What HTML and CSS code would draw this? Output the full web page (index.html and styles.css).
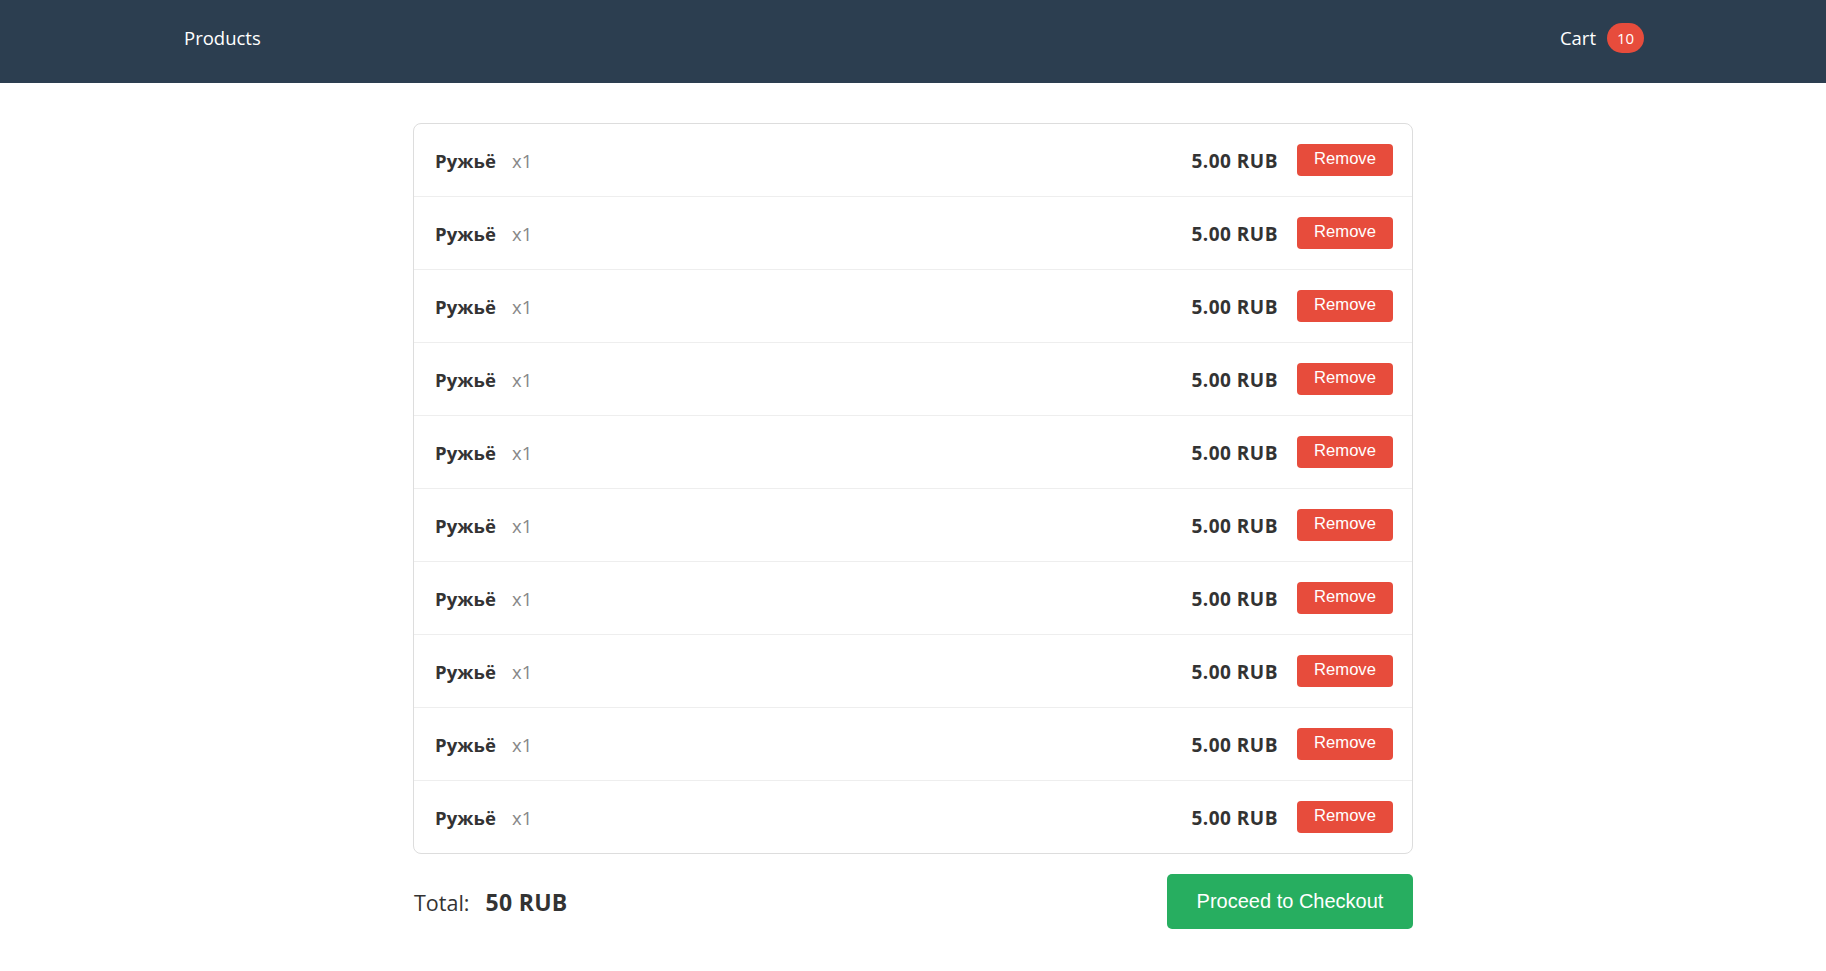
FILE: index.html
```html
<!DOCTYPE html>
<html lang="ru">
<head>
<meta charset="utf-8">
<title>Cart</title>
<link rel="stylesheet" href="styles.css">
</head>
<body>
<header class="topbar">
  <div class="topbar-inner">
    <a class="nav-link" href="#">Products</a>
    <a class="nav-link cart-link" href="#">Cart <span class="badge">10</span></a>
  </div>
</header>
<main class="page">
  <ul class="cart-list">
    <li class="cart-item"><div class="item-info"><span class="item-name">Ружьё</span><span class="item-qty">x1</span></div><div class="item-actions"><span class="item-price">5.00 RUB</span><button class="btn-remove">Remove</button></div></li>
    <li class="cart-item"><div class="item-info"><span class="item-name">Ружьё</span><span class="item-qty">x1</span></div><div class="item-actions"><span class="item-price">5.00 RUB</span><button class="btn-remove">Remove</button></div></li>
    <li class="cart-item"><div class="item-info"><span class="item-name">Ружьё</span><span class="item-qty">x1</span></div><div class="item-actions"><span class="item-price">5.00 RUB</span><button class="btn-remove">Remove</button></div></li>
    <li class="cart-item"><div class="item-info"><span class="item-name">Ружьё</span><span class="item-qty">x1</span></div><div class="item-actions"><span class="item-price">5.00 RUB</span><button class="btn-remove">Remove</button></div></li>
    <li class="cart-item"><div class="item-info"><span class="item-name">Ружьё</span><span class="item-qty">x1</span></div><div class="item-actions"><span class="item-price">5.00 RUB</span><button class="btn-remove">Remove</button></div></li>
    <li class="cart-item"><div class="item-info"><span class="item-name">Ружьё</span><span class="item-qty">x1</span></div><div class="item-actions"><span class="item-price">5.00 RUB</span><button class="btn-remove">Remove</button></div></li>
    <li class="cart-item"><div class="item-info"><span class="item-name">Ружьё</span><span class="item-qty">x1</span></div><div class="item-actions"><span class="item-price">5.00 RUB</span><button class="btn-remove">Remove</button></div></li>
    <li class="cart-item"><div class="item-info"><span class="item-name">Ружьё</span><span class="item-qty">x1</span></div><div class="item-actions"><span class="item-price">5.00 RUB</span><button class="btn-remove">Remove</button></div></li>
    <li class="cart-item"><div class="item-info"><span class="item-name">Ружьё</span><span class="item-qty">x1</span></div><div class="item-actions"><span class="item-price">5.00 RUB</span><button class="btn-remove">Remove</button></div></li>
    <li class="cart-item"><div class="item-info"><span class="item-name">Ружьё</span><span class="item-qty">x1</span></div><div class="item-actions"><span class="item-price">5.00 RUB</span><button class="btn-remove">Remove</button></div></li>
  </ul>
  <div class="summary">
    <div class="total"><span class="total-label">Total:</span><strong class="total-value">50 RUB</strong></div>
    <button class="btn-checkout">Proceed to Checkout</button>
  </div>
</main>
</body>
</html>
```

FILE: styles.css
```css
* { box-sizing: border-box; }
html, body { margin: 0; padding: 0; }
body {
  font-family: "Open Sans", "Noto Sans", sans-serif;
  color: #333;
  background: #fff;
}
.topbar {
  background: #2c3e50;
  height: 83px;
}
.topbar-inner {
  height: 100%;
  padding: 0 182px 8px 184px;
  display: flex;
  align-items: center;
  justify-content: space-between;
}
.nav-link {
  color: #fff;
  text-decoration: none;
  font-size: 18.5px;
  display: flex;
  align-items: center;
}
.badge {
  display: inline-flex;
  align-items: center;
  justify-content: center;
  background: #e74c3c;
  color: #fff;
  font-size: 15px;
  width: 37px;
  height: 30px;
  border-radius: 15px;
  margin-left: 11px;
  margin-top: 1px;
}
.page {
  width: 1000px;
  margin: 40px auto 0;
}
.cart-list {
  list-style: none;
  margin: 0;
  padding: 0;
  border: 1px solid #ddd;
  border-radius: 8px;
}
.cart-item {
  height: 73px;
  padding: 0 19px 0 21px;
  display: flex;
  align-items: center;
  justify-content: space-between;
  border-bottom: 1px solid #eee;
}
.cart-item:last-child { border-bottom: none; height: 72px; }
.item-info { display: flex; align-items: baseline; margin-top: 1px; }
.item-name {
  font-weight: 700;
  font-size: 18.5px;
  color: #333;
  letter-spacing: 0.1px;
}
.item-qty {
  margin-left: 16px;
  color: #888;
  font-size: 18.5px;
}
.item-actions { display: flex; align-items: center; }
.item-price {
  font-weight: 700;
  font-size: 19px;
  color: #333;
  letter-spacing: 0.5px;
  margin-right: 19px;
  margin-top: 1px;
}
.btn-remove {
  font-family: "Liberation Sans", Arial, sans-serif;
  font-size: 16.6px;
  color: #fff;
  background: #e74c3c;
  border: none;
  border-radius: 4px;
  height: 32px;
  width: 96px;
  padding: 0 0 2px;
  cursor: pointer;
}
.summary {
  display: flex;
  align-items: center;
  justify-content: space-between;
  margin-top: 20px;
}
.total {
  display: flex;
  align-items: baseline;
  font-size: 21.5px;
  margin-left: 1px;
}
.total-label { color: #333; }
.total-value { margin-left: 16px; font-weight: 700; font-size: 23px; letter-spacing: 0.3px; }
.btn-checkout {
  font-family: "Liberation Sans", Arial, sans-serif;
  font-size: 20px;
  color: #fff;
  background: #27ae60;
  border: none;
  border-radius: 5px;
  width: 246px;
  height: 55px;
  padding: 0;
  cursor: pointer;
}
```
